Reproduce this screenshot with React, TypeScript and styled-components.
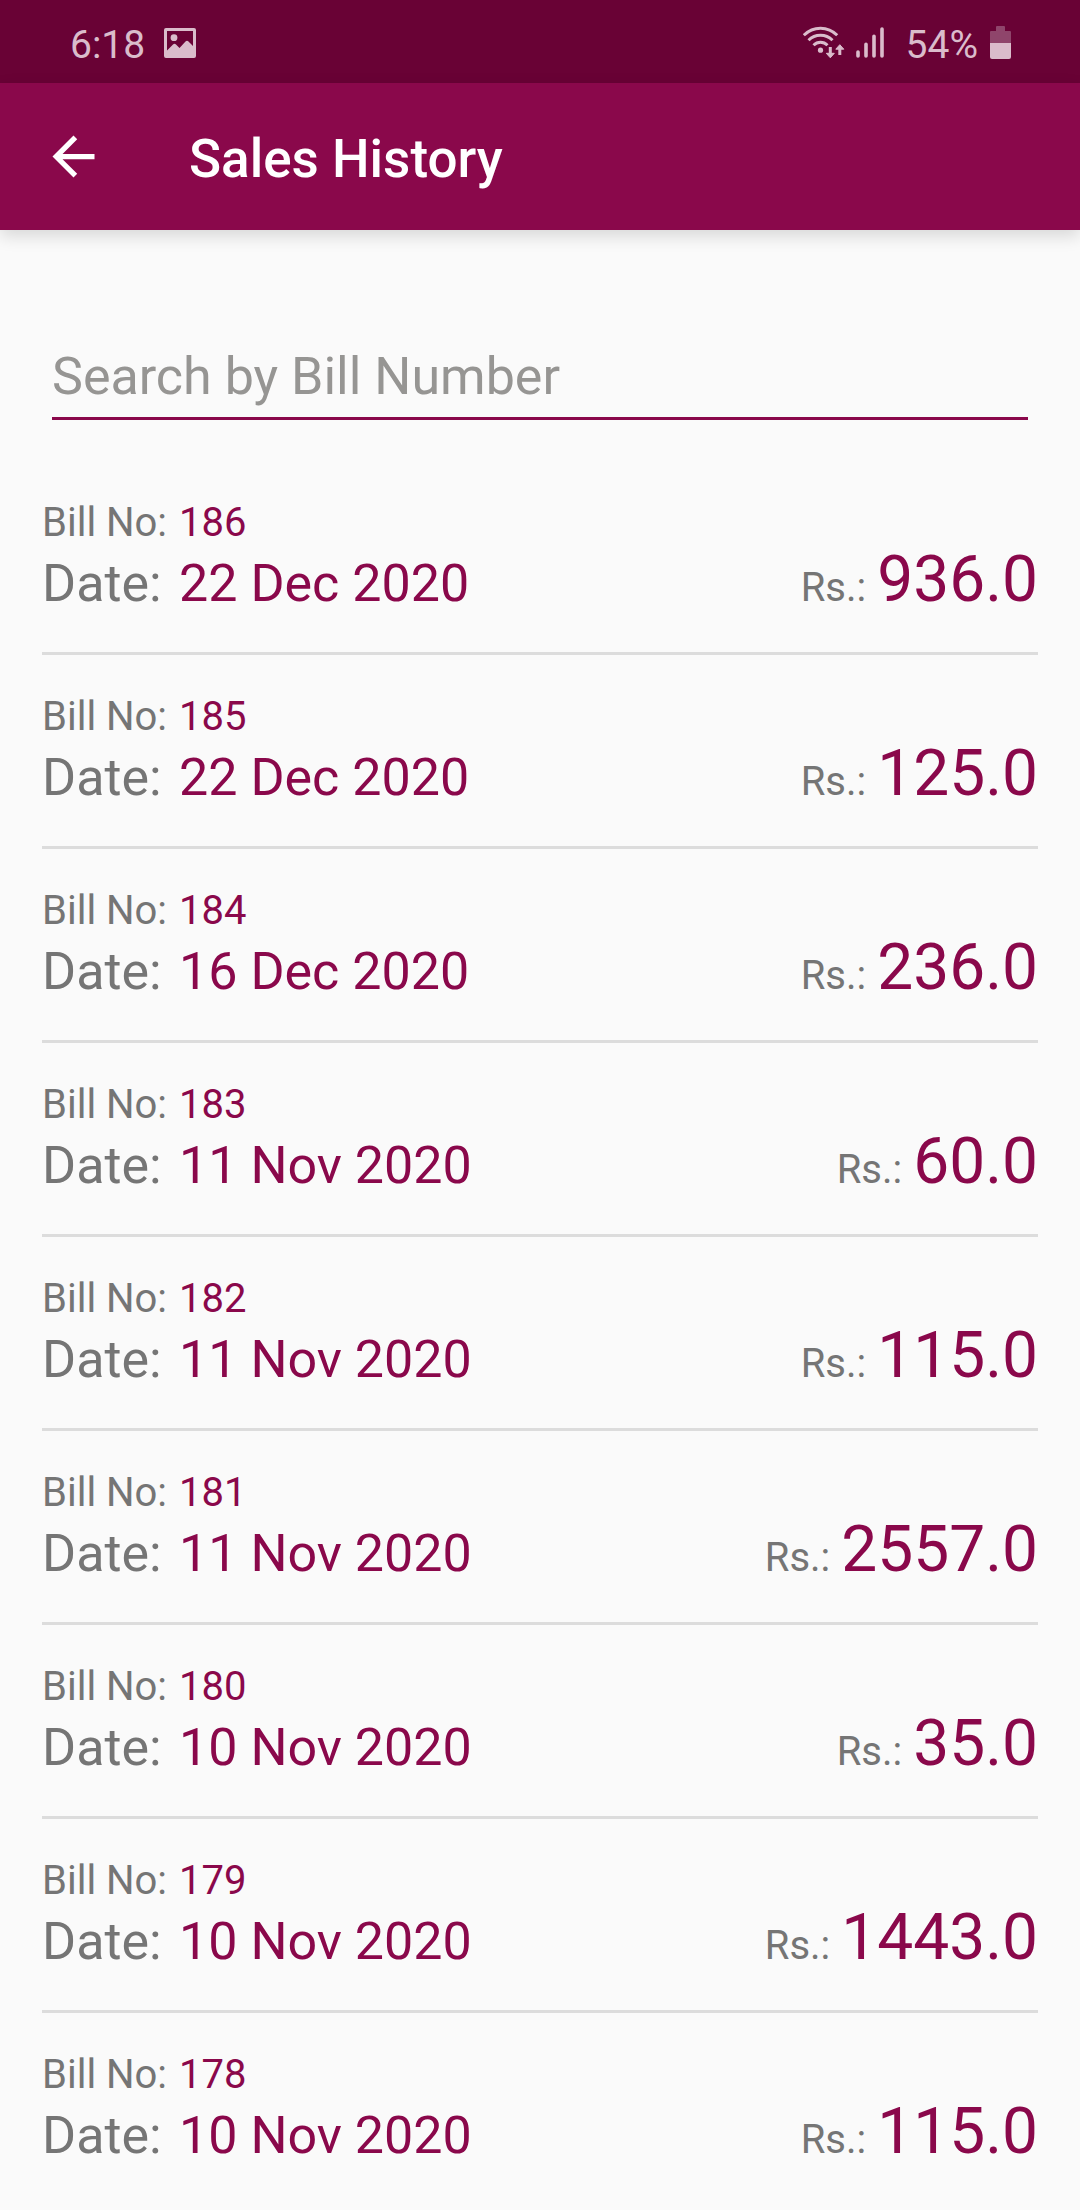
import React, { useState } from "react";
import styled, { createGlobalStyle } from "styled-components";

const color = {
  primary: "#8a084b",
  primaryDark: "#690235",
  status: "#dabccb",
  statusDim: "#8f456b",
  surface: "#fafafa",
  label: "#757575",
  hint: "#969593",
  divider: "#dcdcdc",
};

const GlobalStyle = createGlobalStyle`
  *, *::before, *::after { box-sizing: border-box; }
  body {
    margin: 0;
    background: ${color.surface};
    font-family: Roboto, "Liberation Sans", sans-serif;
  }
`;

const StatusBar = styled.div`
  display: flex;
  align-items: center;
  justify-content: space-between;
  height: 83px;
  padding: 7px 69px 0 70px;
  background: ${color.primaryDark};
  color: ${color.status};
  font-size: 39px;
  line-height: 46px;
`;

const StatusGroup = styled.div<{ $gap: number }>`
  display: flex;
  align-items: center;
  gap: ${(p) => p.$gap}px;
`;

const StatusIcon = styled.svg`
  display: block;
  flex: none;
  margin-bottom: 5px;
`;

const AppBar = styled.header`
  display: flex;
  align-items: center;
  gap: 84px;
  height: 147px;
  padding: 0 42px;
  background: ${color.primary};
  box-shadow: 0 6px 16px rgba(0, 0, 0, 0.14);
`;

const BackButton = styled.button`
  display: flex;
  padding: 0;
  border: 0;
  background: none;
  color: #fff;
  cursor: pointer;
`;

const Title = styled.h1`
  margin: 0;
  padding-top: 4px;
  color: #fff;
  font-size: 53px;
  font-weight: 500;
  line-height: 62px;
`;

const Content = styled.main`
  padding: 104px 42px 0;
`;

const SearchField = styled.input`
  display: block;
  width: calc(100% - 20px);
  height: 86px;
  margin: 0 10px 41px;
  padding: 2px 0 0;
  border: 0;
  border-bottom: 3px solid ${color.primary};
  border-radius: 0;
  outline: 0;
  background: transparent;
  color: #212121;
  font-family: inherit;
  font-size: 52px;
  line-height: 62px;

  &::placeholder {
    color: ${color.hint};
    opacity: 1;
  }
`;

const BillList = styled.ul`
  margin: 0;
  padding: 0;
  list-style: none;
`;

const BillRow = styled.li`
  display: flex;
  align-items: last baseline;
  justify-content: space-between;
  padding: 39px 0 37px;
  border-bottom: 3px solid ${color.divider};

  &:last-child {
    border-bottom: 0;
  }
`;

const Details = styled.div`
  display: grid;
  grid-template-columns: auto auto;
  column-gap: 12px;
  row-gap: 7px;
`;

const Cell = styled.span<{ $large?: boolean; $accent?: boolean }>`
  color: ${(p) => (p.$accent ? color.primary : color.label)};
  font-size: ${(p) => (p.$large ? 52 : 40)}px;
  line-height: ${(p) => (p.$large ? 62 : 46)}px;
`;

const Amount = styled.div`
  display: flex;
  align-items: baseline;
  gap: 11px;
`;

const AmountValue = styled.span`
  color: ${color.primary};
  font-size: 64px;
  line-height: 62px;
`;

const bills = [
  { no: 186, date: "22 Dec 2020", amount: 936 },
  { no: 185, date: "22 Dec 2020", amount: 125 },
  { no: 184, date: "16 Dec 2020", amount: 236 },
  { no: 183, date: "11 Nov 2020", amount: 60 },
  { no: 182, date: "11 Nov 2020", amount: 115 },
  { no: 181, date: "11 Nov 2020", amount: 2557 },
  { no: 180, date: "10 Nov 2020", amount: 35 },
  { no: 179, date: "10 Nov 2020", amount: 1443 },
  { no: 178, date: "10 Nov 2020", amount: 115 },
];

function PictureIcon() {
  return (
    <StatusIcon width="32" height="30" viewBox="0 0 32 30" fill="currentColor" aria-hidden="true">
      <path
        fillRule="evenodd"
        d="M2 0H30Q32 0 32 2V28Q32 30 30 30H2Q0 30 0 28V2Q0 0 2 0ZM3 3V22.500L9 16.500Q10.500 15 12 16.500L15.500 20L21.500 13.500Q23 12 24.500 13.500L29 18V3Z"
      />
      <circle cx="10" cy="9.700" r="3.400" />
    </StatusIcon>
  );
}

function WifiIcon() {
  return (
    <StatusIcon width="42" height="33" viewBox="0 0 42 33" fill="none" stroke="currentColor" aria-hidden="true">
      <path strokeWidth="3" d="M.8 9.300Q7.800 2.200 17.500 2.200T34.200 9.300M5.500 14.300Q10.500 9.300 17.500 9.300T29.500 14.300M10.500 19.300Q13.500 16.300 17.500 16.300T24.500 19.300" />
      <circle cx="17.500" cy="24.200" r="2.600" fill="currentColor" stroke="none" />
      <path strokeWidth="3" d="M27.300 21V29M36.800 29V21" />
      <path fill="currentColor" strokeLinejoin="round" d="M23.300 27.300H31.300L27.300 31.800ZM32.800 23.200H40.800L36.800 18.700Z" />
    </StatusIcon>
  );
}

function SignalIcon() {
  return (
    <StatusIcon width="28" height="31" viewBox="0 0 28 31" stroke="currentColor" strokeWidth="3.6" strokeLinecap="round" aria-hidden="true">
      <path d="M2 25V29M10 17.200V29M18 9.200V29M26 2V29" />
    </StatusIcon>
  );
}

function BatteryIcon() {
  return (
    <StatusIcon width="21" height="33" viewBox="0 0 21 33" aria-hidden="true">
      <path fill={color.statusDim} d="M6 1Q6 0 7 0H14Q15 0 15 1V5H20Q21 5 21 6V17H0V6Q0 5 1 5H6Z" />
      <path fill={color.status} d="M0 17H21V31Q21 33 19 33H2Q0 33 0 31Z" />
    </StatusIcon>
  );
}

export default function App() {
  const [query, setQuery] = useState("");
  const visible = bills.filter((bill) => String(bill.no).includes(query.trim()));

  return (
    <>
      <GlobalStyle />
      <StatusBar>
        <StatusGroup $gap={19}>
          <span>6:18</span>
          <PictureIcon />
        </StatusGroup>
        <StatusGroup $gap={22}>
          <StatusGroup $gap={11}>
            <WifiIcon />
            <SignalIcon />
          </StatusGroup>
          <StatusGroup $gap={12}>
            <span>54%</span>
            <BatteryIcon />
          </StatusGroup>
        </StatusGroup>
      </StatusBar>
      <AppBar>
        <BackButton type="button" aria-label="Back">
          <svg width="63" height="63" viewBox="0 0 24 24" fill="currentColor" aria-hidden="true">
            <path d="M20 11H7.830l5.590-5.590L12 4l-8 8 8 8 1.410-1.410L7.830 13H20v-2z" />
          </svg>
        </BackButton>
        <Title>Sales History</Title>
      </AppBar>
      <Content>
        <SearchField
          type="text"
          inputMode="numeric"
          aria-label="Search by Bill Number"
          placeholder="Search by Bill Number"
          value={query}
          onChange={(event) => setQuery(event.target.value)}
        />
        <BillList>
          {visible.map((bill) => (
            <BillRow key={bill.no}>
              <Details>
                <Cell>Bill No:</Cell>
                <Cell $accent>{bill.no}</Cell>
                <Cell $large>Date:</Cell>
                <Cell $large $accent>{bill.date}</Cell>
              </Details>
              <Amount>
                <Cell>Rs.:</Cell>
                <AmountValue>{bill.amount.toFixed(1)}</AmountValue>
              </Amount>
            </BillRow>
          ))}
        </BillList>
      </Content>
    </>
  );
}
